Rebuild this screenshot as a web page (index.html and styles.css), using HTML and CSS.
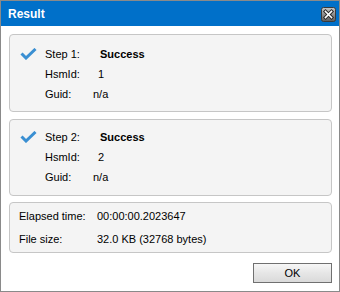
FILE: index.html
```html
<!DOCTYPE html>
<html>
<head>
<meta charset="utf-8">
<link rel="stylesheet" href="styles.css">
</head>
<body>
<div class="window">
  <div class="titlebar">
    <span class="title">Result</span>
    <svg class="close" width="15" height="15" viewBox="0 0 15 15">
      <defs>
        <linearGradient id="cg" x1="0" y1="0" x2="0" y2="1">
          <stop offset="0" stop-color="#c8c8c8"/>
          <stop offset="0.5" stop-color="#8e8e8e"/>
          <stop offset="1" stop-color="#5a5a5a"/>
        </linearGradient>
      </defs>
      <rect x="0.5" y="0.5" width="14" height="14" rx="2" fill="url(#cg)" stroke="#3a3a3a"/>
      <path d="M4.5 4.5 L10.5 10.5 M10.5 4.5 L4.5 10.5" stroke="#2a2a2a" stroke-width="3.6" stroke-linecap="square"/>
      <path d="M4.5 4.5 L10.5 10.5 M10.5 4.5 L4.5 10.5" stroke="#ffffff" stroke-width="1.6" stroke-linecap="square"/>
    </svg>
  </div>
  <div class="content">
    <div class="panel step">
      <svg class="check" width="17" height="12" viewBox="0 0 17 12">
        <path d="M1.5 5.5 L6 10 L15.5 1" fill="none" stroke="#3a8fd2" stroke-width="3"/>
      </svg>
      <div class="rows">
        <div class="row"><span class="label l-step">Step 1:</span><span class="value bold">Success</span></div>
        <div class="row"><span class="label l-hsm">HsmId:</span><span class="value">1</span></div>
        <div class="row"><span class="label l-guid">Guid:</span><span class="value">n/a</span></div>
      </div>
    </div>
    <div class="panel step step2">
      <svg class="check" width="17" height="12" viewBox="0 0 17 12">
        <path d="M1.5 5.5 L6 10 L15.5 1" fill="none" stroke="#3a8fd2" stroke-width="3"/>
      </svg>
      <div class="rows">
        <div class="row"><span class="label l-step">Step 2:</span><span class="value bold">Success</span></div>
        <div class="row"><span class="label l-hsm">HsmId:</span><span class="value">2</span></div>
        <div class="row"><span class="label l-guid">Guid:</span><span class="value">n/a</span></div>
      </div>
    </div>
    <div class="panel summary">
      <div class="srow"><span class="slabel">Elapsed time:</span><span>00:00:00.2023647</span></div>
      <div class="srow"><span class="slabel">File size:</span><span>32.0 KB (32768 bytes)</span></div>
    </div>
    <div class="footer">
      <button class="ok">OK</button>
    </div>
  </div>
</div>
</body>
</html>
```
FILE: styles.css
```css
html, body {
  margin: 0;
  padding: 0;
  background: #ffffff;
}
body {
  font-family: "Liberation Sans", Arial, sans-serif;
  font-size: 11px;
  color: #000;
}
.window {
  width: 340px;
  height: 292px;
  box-sizing: border-box;
  border: 1px solid #8a8a8a;
  background: #ffffff;
  display: flex;
  flex-direction: column;
}
.titlebar {
  height: 25px;
  background: #0070c9;
  display: flex;
  align-items: center;
  justify-content: space-between;
  padding: 0 3px 0 7px;
}
.title {
  color: #ffffff;
  font-weight: bold;
  font-size: 12px;
  margin-top: 1px;
}
.close {
  display: block;
  margin-top: 1px;
}
.content {
  padding: 8px 7px 0 8px;
  display: flex;
  flex-direction: column;
}
.panel {
  background: #f4f4f4;
  border: 1px solid #c6c6c6;
  border-radius: 4px;
}
.step {
  display: flex;
  align-items: flex-start;
  height: 78px;
  box-sizing: border-box;
  padding: 9px 0 0 10px;
  margin-bottom: 7px;
}
.step2 {
  height: 77px;
  padding-top: 7px;
  margin-bottom: 6px;
}
.check {
  display: block;
  margin-top: 4px;
  margin-right: 8px;
}
.rows {
  display: flex;
  flex-direction: column;
}
.row {
  display: flex;
  line-height: 20px;
  height: 20px;
}
.label {
  display: inline-block;
}
.l-step { width: 55px; }
.l-hsm { width: 53px; }
.l-guid { width: 48px; }
.bold {
  font-weight: bold;
}
.summary {
  height: 51px;
  box-sizing: border-box;
  padding: 2px 0 0 9px;
}
.srow {
  display: flex;
  line-height: 23px;
  height: 23px;
}
.slabel {
  width: 78px;
}
.footer {
  display: flex;
  justify-content: flex-end;
  margin-top: 10px;
}
.ok {
  width: 79px;
  height: 20px;
  box-sizing: border-box;
  border: 1px solid #707070;
  border-radius: 0;
  background: linear-gradient(#f7f7f7, #e6e6e6 50%, #dadada);
  font-family: "Liberation Sans", Arial, sans-serif;
  font-size: 11px;
  color: #000;
  padding: 0;
}
```
